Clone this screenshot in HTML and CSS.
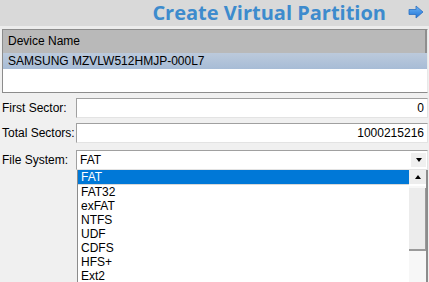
FILE: index.html
```html
<!DOCTYPE html>
<html lang="en">
<head>
    <meta charset="UTF-8">
    <title>Create Virtual Partition</title>
    <link rel="stylesheet" href="styles.css">
</head>
<body>

    <div class="header">
        <h1>Create Virtual Partition</h1>
        <svg class="next" width="16" height="14" viewBox="0 0 16 14">
            <defs>
                <linearGradient id="arrowFill" x1="0" y1="0" x2="0" y2="1">
                    <stop offset="0" stop-color="#6cb4f5"/>
                    <stop offset="1" stop-color="#1f73d6"/>
                </linearGradient>
            </defs>
            <path d="M1 4.5 H8 V1 L15 7 L8 13 V9.5 H1 Z" fill="url(#arrowFill)" stroke="#2b6fc0" stroke-width="0.8"/>
        </svg>
    </div>
    <div class="stripe"></div>

    <div class="listview">
        <div class="lv-head">Device Name</div>
        <div class="lv-row selected">SAMSUNG MZVLW512HMJP-000L7</div>
    </div>

    <div class="form">
        <div class="field first">
            <label>First Sector:</label>
            <div class="edit">0</div>
        </div>
        <div class="field">
            <label>Total Sectors:</label>
            <div class="edit">1000215216</div>
        </div>
        <div class="field combo-field">
            <label>File System:</label>
            <div class="combo">
                <span>FAT</span>
                <span class="drop-btn"><i class="tri down"></i></span>
            </div>
        </div>
        <div class="popup">
            <ul class="options">
                <li class="active">FAT</li>
                <li>FAT32</li>
                <li>exFAT</li>
                <li>NTFS</li>
                <li>UDF</li>
                <li>CDFS</li>
                <li>HFS+</li>
                <li>Ext2</li>
            </ul>
            <div class="scrollbar">
                <div class="sb-btn"><i class="tri up"></i></div>
                <div class="sb-thumb"></div>
                <div class="sb-track"></div>
            </div>
        </div>
    </div>

</body>
</html>
```

FILE: styles.css
```css
body {
    margin: 0;
    background: #f0f0f0;
    font-family: "Liberation Sans", Arial, sans-serif;
    font-size: 12px;
    color: #000;
    height: 282px;
    overflow: hidden;
}
.header {
    height: 26px;
    background: #d9d9d9;
    display: flex;
    justify-content: flex-end;
    align-items: center;
    padding-right: 5px;
}
.header h1 {
    margin: 0 22px 0 0;
    font-family: "Open Sans", sans-serif;
    font-size: 20px;
    font-weight: bold;
    color: #3d8bcd;
    line-height: 26px;
}
.next {
    display: block;
    margin-top: -2px;
}
.stripe {
    height: 3px;
    background: #ececec;
}
.listview {
    margin: 0 1px 0 2px;
    height: 62px;
    border: 1px solid #8c8c8c;
    border-right-color: #e8e8e8;
    background: #fff;
}
.lv-head {
    height: 23px;
    line-height: 23px;
    padding-left: 5px;
    background: #b9b9b9;
    border-right: 2px solid #8e8e8e;
}
.lv-row {
    height: 16px;
    line-height: 16px;
    padding-left: 5px;
}
.lv-row.selected {
    background: linear-gradient(#bccadc, #a7bcd6);
}
.form {
    padding: 5px 1px 0 2px;
}
.field {
    display: flex;
    align-items: center;
    height: 20px;
    margin-top: 5px;
}
.field.first {
    margin-top: 0;
}
.field label {
    width: 74px;
    flex-shrink: 0;
    white-space: nowrap;
}
.edit {
    flex: 1;
    height: 18px;
    line-height: 18px;
    background: #fff;
    border: 1px solid #a0a0a0;
    border-right-color: #e3e3e3;
    border-bottom-color: #e3e3e3;
    text-align: right;
    padding-right: 3px;
}
.combo-field {
    margin-top: 7px;
}
.combo {
    flex: 1;
    height: 18px;
    background: #fff;
    border: 1px solid #a0a0a0;
    border-right-color: #e3e3e3;
    border-bottom-color: #e3e3e3;
    display: flex;
    justify-content: space-between;
    align-items: center;
    padding-left: 3px;
}
.drop-btn {
    width: 15px;
    height: 14px;
    margin-right: 1px;
    background: #f0f0f0;
    display: flex;
    justify-content: center;
    align-items: center;
}
.tri {
    width: 0;
    height: 0;
    border-left: 3px solid transparent;
    border-right: 3px solid transparent;
}
.tri.down {
    border-top: 4px solid #000;
}
.tri.up {
    border-bottom: 4px solid #000;
}
.popup {
    margin-left: 75px;
    display: flex;
    height: 113px;
    background: #fff;
    border-left: 1px solid #8c8c8c;
    border-right: 2px solid #8c8c8c;
}
.options {
    list-style: none;
    margin: 0;
    padding: 0;
    flex: 1;
}
.options li {
    height: 14px;
    line-height: 14px;
    padding-left: 3px;
}
.options li.active {
    background: #0078d7;
    color: #fff;
    border-bottom: 1px solid #d8d8d8;
}
.scrollbar {
    width: 17px;
    display: flex;
    flex-direction: column;
    background: #f7f7f7;
}
.sb-btn {
    height: 14px;
    background: #ededed;
    display: flex;
    justify-content: center;
    align-items: center;
    border-bottom: 2px solid #fff;
}
.sb-thumb {
    height: 61px;
    background: #ececec;
    border-right: 1px solid #9a9a9a;
    border-bottom: 2px solid #9a9a9a;
    margin-top: 2px;
}
.sb-track {
    flex: 1;
}
```
